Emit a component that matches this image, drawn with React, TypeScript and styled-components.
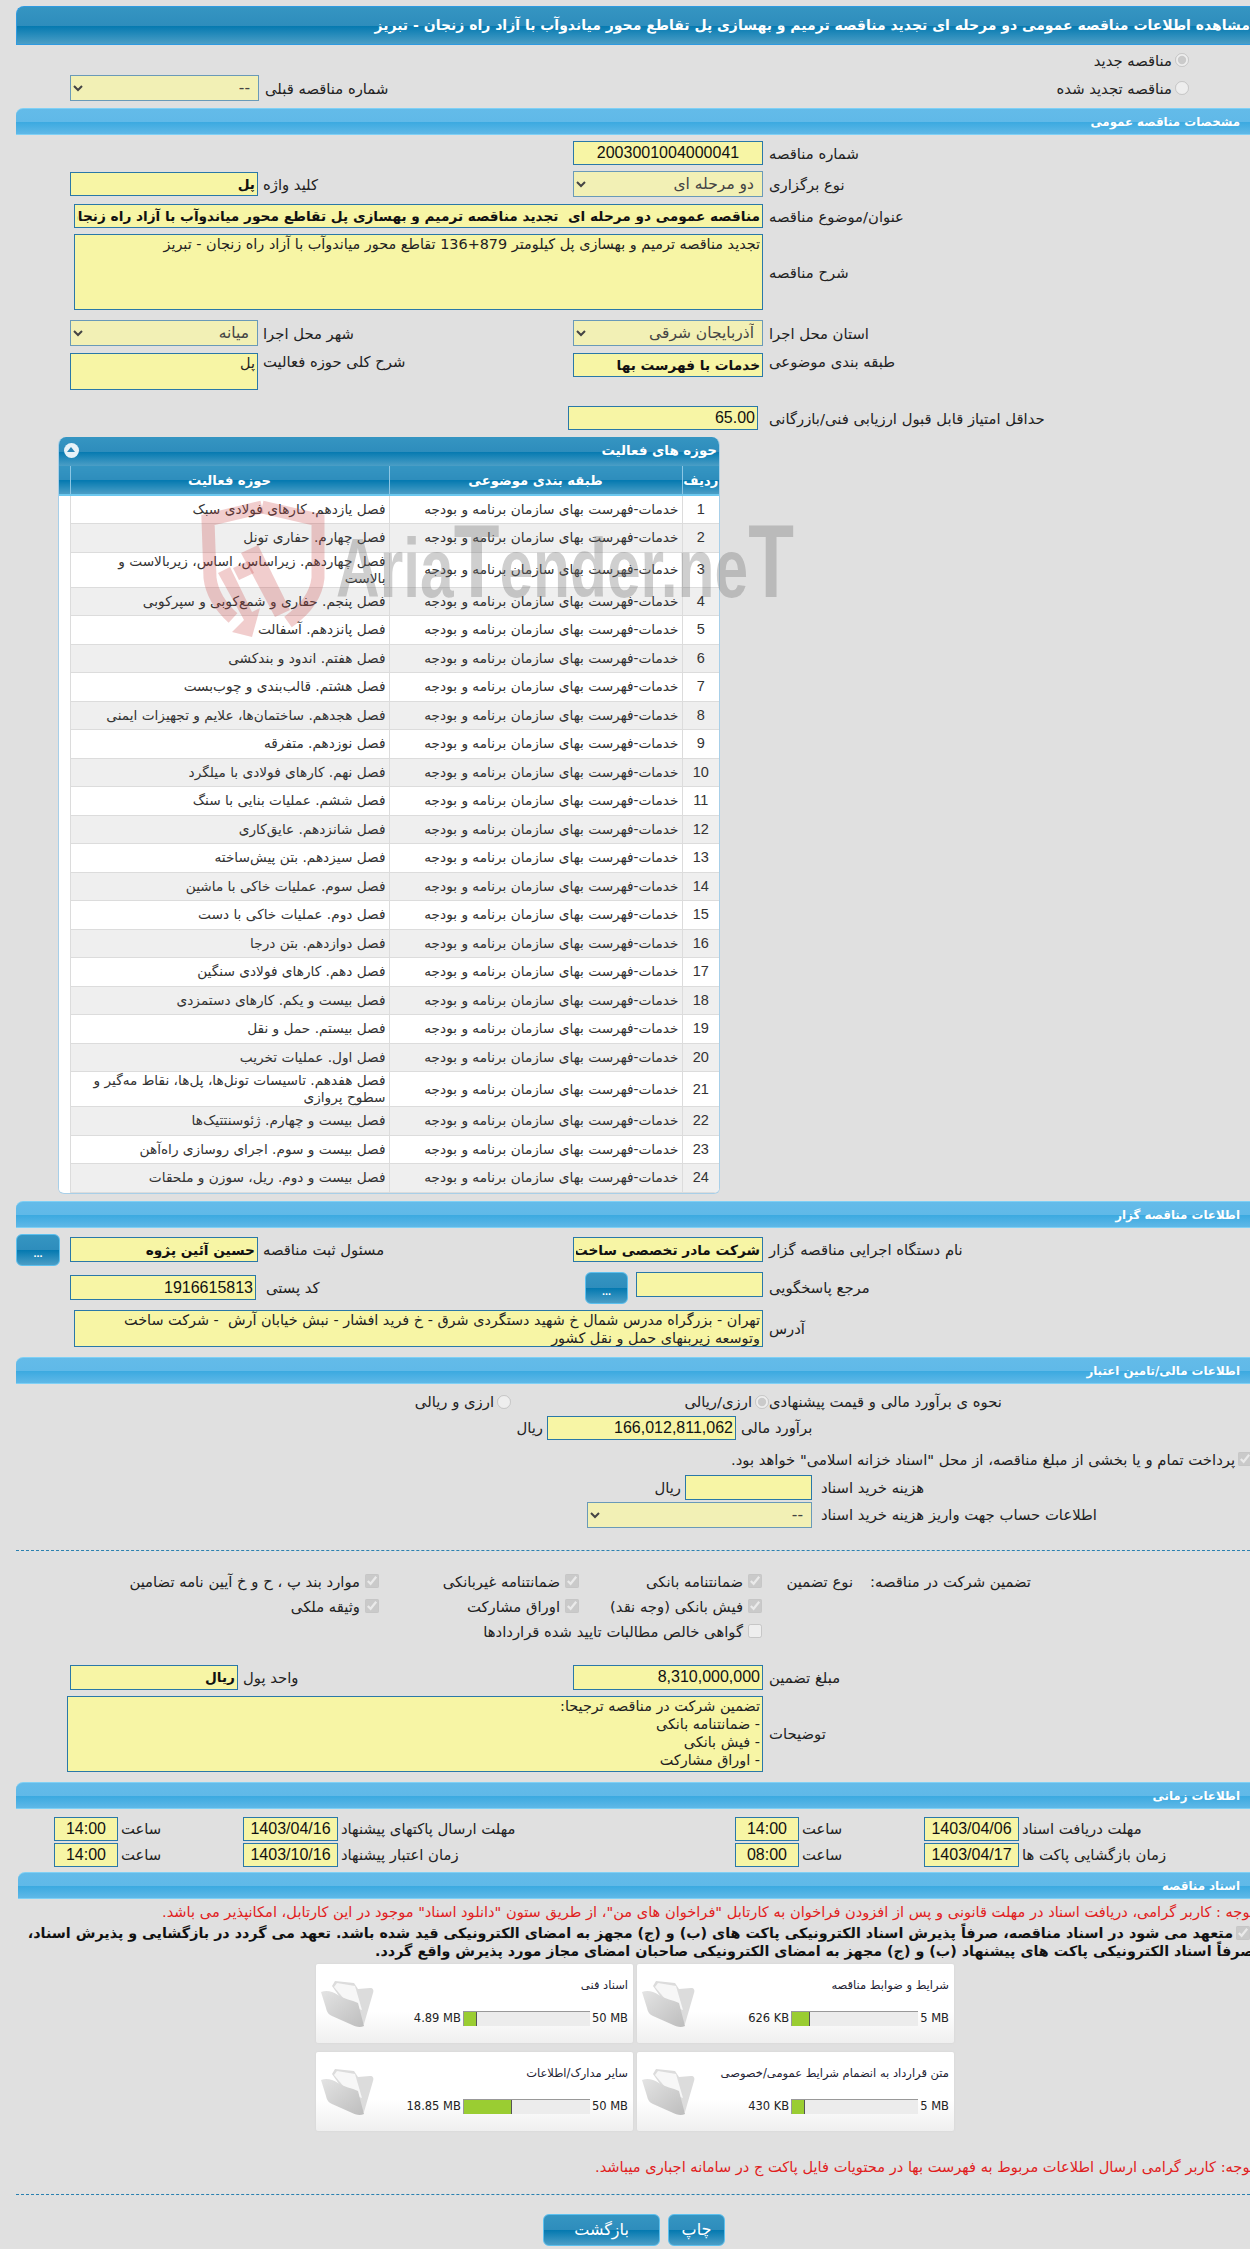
import React from 'react';
import styled, { createGlobalStyle } from 'styled-components';

const GlobalStyle = createGlobalStyle`
  html, body {
    margin: 0;
    padding: 0;
    background: #e0e0e0;
  }
  * {
    box-sizing: border-box;
  }
`;

const FONT = `"DejaVu Sans", "Liberation Sans", sans-serif`;
const DIGITS = `"Liberation Sans", "DejaVu Sans", sans-serif`;
const DARK = 'linear-gradient(#3595c2 0%, #2e8dbc 50%, #0479b0 51%, #4b9ec6 100%)';
const LIGHT = 'linear-gradient(#63bbe9 0%, #60b9e8 50%, #3aa9e0 51%, #5fb8e7 100%)';

const Page = styled.div`
  position: relative;
  width: 1250px;
  height: 2249px;
  padding: 6px 0 0 16px;
  overflow: hidden;
  direction: rtl;
  background: #e0e0e0;
  color: #222;
  font-family: ${FONT};
  font-size: 14.8px;
`;

const TitleBar = styled.div`
  height: 39px;
  padding-right: 0;
  border: 1px solid #2f9ae0;
  border-width: 1px 0 1px 1px;
  border-top-left-radius: 8px;
  background: ${DARK};
  color: #fff;
  font-size: 14px;
  font-weight: bold;
  line-height: 36px;
  white-space: nowrap;
`;

const SectionBar = styled.div<{ $mt: number; $ml?: number }>`
  height: 27px;
  margin-top: ${p => p.$mt}px;
  margin-left: ${p => p.$ml || 0}px;
  padding-right: 10px;
  border-top: 1px solid #7fd0f5;
  border-bottom: 1px solid #7fd0f5;
  border-top-left-radius: 7px;
  background: ${LIGHT};
  color: #fff;
  font-size: 11.8px;
  font-weight: bold;
  line-height: 26px;
`;

const Row = styled.div<{ $mt: number; $h: number; $start?: boolean }>`
  display: flex;
  align-items: ${p => (p.$start ? 'flex-start' : 'center')};
  height: ${p => p.$h}px;
  margin-top: ${p => p.$mt}px;
`;

const Lbl = styled.div<{ $w: number; $pl?: number }>`
  flex: none;
  width: ${p => p.$w}px;
  padding-left: ${p => p.$pl ?? 6}px;
  text-align: left;
  white-space: nowrap;
`;

const Input = styled.input<{ $w: number; $h?: number; $bold?: boolean; $center?: boolean; $top?: boolean }>`
  flex: none;
  width: ${p => p.$w}px;
  height: ${p => p.$h || 24}px;
  padding: 0 2px;
  border: 1px solid #2a78a8;
  background: #f7f5a5;
  color: #111;
  font-family: ${p => (p.$bold ? FONT : DIGITS)};
  font-size: ${p => (p.$bold ? 13.7 : 16)}px;
  font-weight: ${p => (p.$bold ? 'bold' : 'normal')};
  text-align: ${p => (p.$center ? 'center' : 'right')};
  align-self: ${p => (p.$top ? 'flex-start' : 'auto')};
  outline: none;
`;

const Area = styled.textarea<{ $w: number; $h: number }>`
  flex: none;
  display: block;
  width: ${p => p.$w}px;
  height: ${p => p.$h}px;
  padding: 0 2px;
  border: 1px solid #2a78a8;
  background: #f7f5a5;
  color: #222;
  font-family: ${FONT};
  font-size: 14.4px;
  line-height: 18px;
  resize: none;
  overflow: hidden;
  outline: none;
`;

const Select = styled.select<{ $w: number }>`
  flex: none;
  width: ${p => p.$w}px;
  height: 26px;
  padding: 0 4px;
  border: 1px solid #6a9ab8;
  background-color: #f2f0b5;
  color: #444;
  font-family: ${FONT};
  font-size: 15.5px;
  opacity: 1;
`;

const DotsButton = styled.button<{ $mr?: number; $w?: number }>`
  flex: none;
  width: ${p => p.$w || 44}px;
  height: 32px;
  margin-right: ${p => p.$mr ?? 10}px;
  padding: 8px 0 0;
  border: 1px solid #5cc0ee;
  border-radius: 6px;
  background: ${DARK};
  color: #fff;
  font-size: 11px;
  font-weight: bold;
  line-height: 1;
`;

const RadioGroup = styled.label<{ $mr?: number; $w?: number }>`
  display: flex;
  flex: none;
  align-items: center;
  gap: 3px;
  width: ${p => (p.$w ? `${p.$w}px` : 'auto')};
  margin-right: ${p => p.$mr || 0}px;
  white-space: nowrap;
`;

const Radio = styled.input.attrs({ type: 'radio', disabled: true })`
  flex: none;
  width: 14px;
  height: 14px;
  margin: 0;
`;

const Check = styled.input.attrs({ type: 'checkbox', disabled: true })`
  flex: none;
  width: 14px;
  height: 14px;
  margin: 0;
`;

const Unit = styled.span`
  margin-right: 4px;
  white-space: nowrap;
`;

const Spacer = styled.div`
  flex: 1;
`;

const PrevGroup = styled.div`
  display: flex;
  align-items: center;
  gap: 6px;
  margin-left: 54px;
  white-space: nowrap;
`;

const Panel = styled.div`
  width: 662px;
  margin: 7px 530px 0 0;
  border: 1px solid #a8cfe8;
  border-top: 0;
  border-radius: 8px 8px 6px 6px;
  background: #fff;
  overflow: hidden;
`;

const PanelHead = styled.div`
  position: relative;
  height: 29px;
  padding-right: 2px;
  background: ${DARK};
  color: #fff;
  font-size: 13.4px;
  font-weight: bold;
  line-height: 28px;
`;

const Collapse = styled.span`
  position: absolute;
  top: 6px;
  left: 5px;
  width: 15px;
  height: 15px;
  border-radius: 50%;
  background: #e6f2f8;
  &::after {
    content: '';
    position: absolute;
    top: 4px;
    left: 3px;
    border: 4.5px solid transparent;
    border-top: 0;
    border-bottom: 5px solid #2a85b5;
  }
`;

const Table = styled.table`
  width: 661px;
  border-collapse: collapse;
  table-layout: fixed;
`;

const Th = styled.th<{ $w?: number }>`
  width: ${p => (p.$w ? `${p.$w}px` : 'auto')};
  height: 29px;
  padding: 0;
  border-left: 1px solid #8cc6e4;
  border-bottom: 2px solid #6cc8ef;
  background: ${DARK};
  color: #fff;
  font-size: 13.2px;
  font-weight: bold;
`;

const Tr = styled.tr<{ $tall: boolean; $alt: boolean }>`
  height: ${p => (p.$tall ? 34.5 : 28.5)}px;
  background: ${p => (p.$alt ? '#efefef' : '#fff')};
`;

const Td = styled.td<{ $center?: boolean }>`
  padding: 0 3px;
  border-left: 1px solid #dcdcdc;
  border-bottom: 1px solid #dcdcdc;
  color: #333;
  font-family: ${p => (p.$center ? DIGITS : FONT)};
  font-size: ${p => (p.$center ? 14.5 : 13.7)}px;
  line-height: 17px;
  text-align: ${p => (p.$center ? 'center' : 'right')};
`;

const Gutter = styled.td`
  background: #fff;
  border-left: 1px solid #dcdcdc;
`;

const Divider = styled.div<{ $mt: number }>`
  margin-top: ${p => p.$mt}px;
  border-top: 1px dashed #2a80b0;
`;

const GuaranteeBlock = styled.div`
  display: flex;
  margin-top: 18px;
  padding-right: 219px;
`;

const GuaranteeLabel = styled.div<{ $w: number }>`
  flex: none;
  width: ${p => p.$w}px;
  height: 25px;
  line-height: 25px;
  white-space: nowrap;
`;

const CheckGrid = styled.div`
  display: grid;
  grid-template-columns: 183px 200px 1fr;
  grid-auto-rows: 25px;
`;

const CheckItem = styled.label<{ $wide?: boolean }>`
  display: flex;
  align-items: center;
  gap: 5px;
  white-space: nowrap;
  grid-column: ${p => (p.$wide ? 'span 2' : 'auto')};
`;

const RedNote = styled.div<{ $mt: number }>`
  height: 24px;
  margin: ${p => p.$mt}px -4px 0 0;
  color: #e02020;
  font-size: 14.6px;
  line-height: 24px;
  white-space: nowrap;
`;

const PledgeLine = styled.div<{ $mr?: number }>`
  display: flex;
  align-items: center;
  gap: 3px;
  height: 18px;
  margin-right: ${p => p.$mr || 0}px;
  color: #111;
  font-size: 14.3px;
  font-weight: bold;
  white-space: nowrap;
`;

const CardGrid = styled.div`
  display: grid;
  grid-template-columns: 317px 317px;
  grid-auto-rows: 79px;
  gap: 9px 4px;
  margin: 4px 296px 0 0;
`;

const Card = styled.div`
  display: flex;
  direction: ltr;
  padding: 0 5px 0 4px;
  border-radius: 2px;
  background: linear-gradient(#fff 0%, #fff 60%, #efefef 100%);
  box-shadow: 0 0 2px #d0d0d0;
`;

const FolderBox = styled.div`
  flex: none;
  width: 57px;
  padding-top: 16px;
`;

const CardBody = styled.div`
  flex: 1;
  display: flex;
  flex-direction: column;
`;

const CardTitle = styled.div`
  height: 47px;
  padding-top: 14px;
  direction: rtl;
  color: #223;
  font-size: 11.5px;
  white-space: nowrap;
`;

const Meter = styled.div`
  display: flex;
  align-items: center;
  justify-content: flex-end;
  gap: 2px;
  color: #222;
  font-size: 11.5px;
  white-space: nowrap;
`;

const Track = styled.div`
  flex: none;
  width: 127px;
  height: 15px;
  border-top: 1px solid #999;
  border-left: 1px solid #999;
  background: #ececec;
`;

const Fill = styled.div`
  height: 100%;
  border-right: 1px solid #555;
  background: #9acd32;
`;

const Buttons = styled.div`
  display: flex;
  gap: 8px;
  margin: 19px 525px 0 0;
`;

const ActionButton = styled.button<{ $w: number }>`
  width: ${p => p.$w}px;
  height: 32px;
  border: 1px solid #5cc0ee;
  border-radius: 6px;
  background: ${DARK};
  color: #fff;
  font-family: ${FONT};
  font-size: 16px;
`;

const Footer = styled.div`
  height: 1px;
  margin-top: 6px;
  background: #fff;
`;

const WatermarkText = styled.div`
  position: absolute;
  top: 506px;
  left: 336px;
  direction: ltr;
  color: rgba(105, 105, 105, 0.32);
  font-family: "Liberation Sans", sans-serif;
  font-size: 84px;
  font-weight: bold;
  line-height: 110px;
  white-space: nowrap;
  transform: scaleX(0.72);
  transform-origin: left center;
  pointer-events: none;
`;

const BigT = styled.span`
  font-size: 104px;
`;

const WatermarkLogo = styled.svg`
  position: absolute;
  top: 500px;
  left: 200px;
  width: 126px;
  height: 138px;
  pointer-events: none;
`;

const activities = [
  'فصل یازدهم. کارهای فولادی سبک',
  'فصل چهارم. حفاری تونل',
  'فصل چهاردهم. زیراساس، اساس، زیربالاست  و بالاست',
  'فصل پنجم. حفاری و شمع‌کوبی و سپرکوبی',
  'فصل پانزدهم. آسفالت',
  'فصل هفتم. اندود و بندکشی',
  'فصل هشتم. قالب‌بندی و چوب‌بست',
  'فصل هجدهم. ساختمان‌ها، علایم و تجهیزات ایمنی',
  'فصل نوزدهم. متفرقه',
  'فصل نهم. کارهای فولادی با میلگرد',
  'فصل ششم. عملیات بنایی با سنگ',
  'فصل شانزدهم. عایق‌کاری',
  'فصل سیزدهم. بتن پیش‌ساخته',
  'فصل سوم. عملیات خاکی با ماشین',
  'فصل دوم. عملیات خاکی با دست',
  'فصل دوازدهم. بتن درجا',
  'فصل دهم. کارهای فولادی سنگین',
  'فصل بیست و یکم. کارهای دستمزدی',
  'فصل بیستم. حمل و نقل',
  'فصل اول. عملیات تخریب',
  'فصل هفدهم. تاسیسات تونل‌ها، پل‌ها، نقاط مه‌گیر و سطوح پروازی',
  'فصل بیست و چهارم. ژئوسنتتیک‌ها',
  'فصل بیست و سوم. اجرای روسازی راه‌آهن',
  'فصل بیست و دوم. ریل، سوزن و ملحقات',
];

const files = [
  { title: 'شرایط و ضوابط مناقصه', used: '626 KB', max: '5 MB', pct: 14 },
  { title: 'اسناد فنی', used: '4.89 MB', max: '50 MB', pct: 10.5 },
  { title: 'متن قرارداد به انضمام شرایط عمومی/خصوصی', used: '430 KB', max: '5 MB', pct: 10.5 },
  { title: 'سایر مدارک/اطلاعات', used: '18.85 MB', max: '50 MB', pct: 38 },
];

const FolderIcon = () => (
  <svg width="54" height="48" viewBox="0 0 54 48">
    <defs>
      <linearGradient id="folderFront" x1="0" y1="0" x2="1" y2="1">
        <stop offset="0" stopColor="#e4e4e4" />
        <stop offset="1" stopColor="#bdbdbd" />
      </linearGradient>
    </defs>
    <path d="M12 6 L15 1 L34 3 L38 9 L50 8 C53 8 54 10 53 13 L44 44 L36 40 Z" fill="#dcdcdc" />
    <path d="M14 7 L17 3 L35 6 L42 30 L30 26 Z" fill="#f7f7f7" />
    <path d="M1 12 C6 10 12 11 18 15 C24 19 32 20 38 23 L44 46 C40 48 36 47 30 44 L12 36 C8 34 7 32 6 28 Z" fill="url(#folderFront)" />
  </svg>
);

const DocCard = ({ title, used, max, pct }: (typeof files)[number]) => (
  <Card>
    <FolderBox>
      <FolderIcon />
    </FolderBox>
    <CardBody>
      <CardTitle>{title}</CardTitle>
      <Meter>
        <span>{used}</span>
        <Track>
          <Fill style={{ width: `${pct}%` }} />
        </Track>
        <span>{max}</span>
      </Meter>
    </CardBody>
  </Card>
);

const Val = ({ w, v, ...rest }: { w: number; v: string; $h?: number; $bold?: boolean; $center?: boolean; $top?: boolean }) => (
  <Input $w={w} value={v} readOnly {...rest} />
);

const Drop = ({ w, v }: { w: number; v: string }) => (
  <Select $w={w} value={v} disabled onChange={() => undefined}>
    <option value={v}>{v}</option>
  </Select>
);

const App = () => (
  <Page>
    <GlobalStyle />
    <TitleBar>
      مشاهده اطلاعات مناقصه عمومی دو مرحله ای تجدید مناقصه ترمیم و بهسازی پل تقاطع محور میاندوآب با آزاد راه زنجان - تبریز
    </TitleBar>

    <Row $mt={0} $h={30}>
      <RadioGroup $mr={61}>
        <Radio checked readOnly />
        مناقصه جدید
      </RadioGroup>
    </Row>
    <Row $mt={0} $h={26}>
      <RadioGroup $mr={61}>
        <Radio />
        مناقصه تجدید شده
      </RadioGroup>
      <Spacer />
      <PrevGroup>
        شماره مناقصه قبلی
        <Drop w={189} v="--" />
      </PrevGroup>
    </Row>

    <SectionBar $mt={7}>مشخصات مناقصه عمومی</SectionBar>
    <Row $mt={6} $h={24}>
      <Lbl $w={487}>شماره مناقصه</Lbl>
      <Val w={190} v="2003001004000041" $center />
    </Row>
    <Row $mt={6} $h={26}>
      <Lbl $w={487}>نوع برگزاری</Lbl>
      <Drop w={190} v="دو مرحله ای" />
      <Lbl $w={315} $pl={5}>کلید واژه</Lbl>
      <Val w={188} v="پل" $bold />
    </Row>
    <Row $mt={7} $h={24}>
      <Lbl $w={487}>عنوان/موضوع مناقصه</Lbl>
      <Val w={689} v="مناقصه عمومی دو مرحله ای  تجدید مناقصه ترمیم و بهسازی پل تقاطع محور میاندوآب با آزاد راه زنجان - تبریز" $bold />
    </Row>
    <Row $mt={6} $h={76}>
      <Lbl $w={487}>شرح مناقصه</Lbl>
      <Area $w={689} $h={76} readOnly value="تجدید مناقصه ترمیم و بهسازی پل کیلومتر 879+136 تقاطع محور میاندوآب با آزاد راه زنجان - تبریز" />
    </Row>
    <Row $mt={10} $h={26}>
      <Lbl $w={487}>استان محل اجرا</Lbl>
      <Drop w={190} v="آذربایجان شرقی" />
      <Lbl $w={315} $pl={5}>شهر محل اجرا</Lbl>
      <Drop w={188} v="میانه" />
    </Row>
    <Row $mt={7} $h={37} $start>
      <Lbl $w={487}>طبقه بندی موضوعی</Lbl>
      <Val w={190} v="خدمات با فهرست بها" $bold />
      <Lbl $w={315} $pl={5}>شرح کلی حوزه فعالیت</Lbl>
      <Area $w={188} $h={37} readOnly value="پل" />
    </Row>
    <Row $mt={16} $h={24}>
      <Lbl $w={492} $pl={11}>حداقل امتیاز قابل قبول ارزیابی فنی/بازرگانی</Lbl>
      <Val w={190} v="65.00" />
    </Row>

    <Panel>
      <PanelHead>
        حوزه های فعالیت
        <Collapse />
      </PanelHead>
      <Table>
        <thead>
          <tr>
            <Th $w={37}>ردیف</Th>
            <Th $w={293}>طبقه بندی موضوعی</Th>
            <Th $w={319}>حوزه فعالیت</Th>
            <Th />
          </tr>
        </thead>
        <tbody>
          {activities.map((name, i) => (
            <Tr key={name} $tall={i === 2 || i === 20} $alt={i % 2 === 1}>
              <Td $center>{i + 1}</Td>
              <Td>خدمات-فهرست بهای سازمان برنامه و بودجه</Td>
              <Td>{name}</Td>
              <Gutter />
            </Tr>
          ))}
        </tbody>
      </Table>
    </Panel>

    <SectionBar $mt={7}>اطلاعات مناقصه گزار</SectionBar>
    <Row $mt={6} $h={32}>
      <Lbl $w={487}>نام دستگاه اجرایی مناقصه گزار</Lbl>
      <Val w={190} v="شرکت مادر تخصصی ساخت و توسعه زیربناهای حمل و نقل" $h={25} $bold />
      <Lbl $w={315} $pl={5}>مسئول ثبت مناقصه</Lbl>
      <Val w={188} v="حسین آئین پژوه" $h={25} $bold />
      <DotsButton>...</DotsButton>
    </Row>
    <Row $mt={6} $h={32}>
      <Lbl $w={487}>مرجع پاسخگویی</Lbl>
      <Val w={127} v="" $h={25} $top />
      <DotsButton $mr={8} $w={43}>...</DotsButton>
      <Lbl $w={329} $pl={10}>کد پستی</Lbl>
      <Val w={186} v="1916615813" $h={25} />
    </Row>
    <Row $mt={6} $h={37}>
      <Lbl $w={487}>آدرس</Lbl>
      <Area $w={689} $h={37} readOnly value={'تهران - بزرگراه مدرس شمال خ شهید دستگردی شرق - خ فرید افشار - نبش خیابان آرش  - شرکت ساخت\nوتوسعه زیربنهای حمل و نقل کشور'} />
    </Row>

    <SectionBar $mt={10}>اطلاعات مالی/تامین اعتبار</SectionBar>
    <Row $mt={8} $h={20}>
      <Lbl $w={481} $pl={0}>نحوه ی برآورد مالی و قیمت پیشنهادی</Lbl>
      <RadioGroup $w={258}>
        <Radio checked readOnly />
        ارزی/ریالی
      </RadioGroup>
      <RadioGroup>
        <Radio />
        ارزی و ریالی
      </RadioGroup>
    </Row>
    <Row $mt={4} $h={24}>
      <Lbl $w={514} $pl={5}>برآورد مالی</Lbl>
      <Val w={189} v="166,012,811,062" />
      <Unit>ریال</Unit>
    </Row>
    <Row $mt={11} $h={17}>
      <RadioGroup $mr={-2}>
        <Check checked readOnly />
        پرداخت تمام و یا بخشی از مبلغ مناقصه، از محل "اسناد خزانه اسلامی" خواهد بود.
      </RadioGroup>
    </Row>
    <Row $mt={7} $h={25}>
      <Lbl $w={438} $pl={9}>هزینه خرید اسناد</Lbl>
      <Val w={127} v="" $h={25} />
      <Unit>ریال</Unit>
    </Row>
    <Row $mt={2} $h={26}>
      <Lbl $w={438} $pl={9}>اطلاعات حساب جهت واریز هزینه خرید اسناد</Lbl>
      <Drop w={225} v="--" />
    </Row>

    <Divider $mt={22} />
    <GuaranteeBlock>
      <GuaranteeLabel $w={178}>تضمین شرکت در مناقصه:</GuaranteeLabel>
      <GuaranteeLabel $w={91}>نوع تضمین</GuaranteeLabel>
      <CheckGrid>
        <CheckItem><Check checked readOnly />ضمانتنامه بانکی</CheckItem>
        <CheckItem><Check checked readOnly />ضمانتنامه غیربانکی</CheckItem>
        <CheckItem><Check checked readOnly />موارد بند پ ، ح و خ آیین نامه تضامین</CheckItem>
        <CheckItem><Check checked readOnly />فیش بانکی (وجه نقد)</CheckItem>
        <CheckItem><Check checked readOnly />اوراق مشارکت</CheckItem>
        <CheckItem><Check checked readOnly />وثیقه ملکی</CheckItem>
        <CheckItem $wide><Check />گواهی خالص مطالبات تایید شده قراردادها</CheckItem>
      </CheckGrid>
    </GuaranteeBlock>
    <Row $mt={21} $h={25}>
      <Lbl $w={487}>مبلغ تضمین</Lbl>
      <Val w={190} v="8,310,000,000" $h={25} />
      <Lbl $w={335} $pl={5}>واحد پول</Lbl>
      <Val w={168} v="ریال" $h={25} $bold />
    </Row>
    <Row $mt={6} $h={76}>
      <Lbl $w={487}>توضیحات</Lbl>
      <Area $w={696} $h={76} readOnly value={'تضمین شرکت در مناقصه ترجیحا:\n- ضمانتنامه بانکی\n- فیش بانکی\n- اوراق مشارکت'} />
    </Row>

    <SectionBar $mt={10}>اطلاعات زمانی</SectionBar>
    <Row $mt={8} $h={24}>
      <Lbl $w={231} $pl={3}>مهلت دریافت اسناد</Lbl>
      <Val w={95} v="1403/04/06" $center />
      <Lbl $w={125} $pl={3}>ساعت</Lbl>
      <Val w={64} v="14:00" $center />
      <Lbl $w={397} $pl={3}>مهلت ارسال پاکتهای پیشنهاد</Lbl>
      <Val w={95} v="1403/04/16" $center />
      <Lbl $w={125} $pl={3}>ساعت</Lbl>
      <Val w={64} v="14:00" $center />
    </Row>
    <Row $mt={2} $h={24}>
      <Lbl $w={231} $pl={3}>زمان بازگشایی پاکت ها</Lbl>
      <Val w={95} v="1403/04/17" $center />
      <Lbl $w={125} $pl={3}>ساعت</Lbl>
      <Val w={64} v="08:00" $center />
      <Lbl $w={397} $pl={3}>زمان اعتبار پیشنهاد</Lbl>
      <Val w={95} v="1403/10/16" $center />
      <Lbl $w={125} $pl={3}>ساعت</Lbl>
      <Val w={64} v="14:00" $center />
    </Row>

    <SectionBar $mt={5} $ml={2}>اسناد مناقصه</SectionBar>
    <RedNote $mt={1}>
      توجه : کاربر گرامی، دریافت اسناد در مهلت قانونی و پس از افزودن فراخوان به کارتابل "فراخوان های من"، از طریق ستون "دانلود اسناد" موجود در این کارتابل، امکانپذیر می باشد.
    </RedNote>
    <PledgeLine>
      <Check checked readOnly />
      متعهد می شود در اسناد مناقصه، صرفاً پذیرش اسناد الکترونیکی پاکت های (ب) و (ج) مجهز به امضای الکترونیکی قید شده باشد. تعهد می گردد در بازگشایی و پذیرش اسناد،
    </PledgeLine>
    <PledgeLine $mr={-4}>
      صرفاً اسناد الکترونیکی پاکت های پیشنهاد (ب) و (ج) مجهز به امضای الکترونیکی صاحبان امضای مجاز مورد پذیرش واقع گردد.
    </PledgeLine>

    <CardGrid>
      {files.map(f => (
        <DocCard key={f.title} {...f} />
      ))}
    </CardGrid>

    <RedNote $mt={24}>
      توجه: کاربر گرامی ارسال اطلاعات مربوط به فهرست بها در محتویات فایل پاکت ج در سامانه اجباری میباشد.
    </RedNote>
    <Divider $mt={15} />
    <Buttons>
      <ActionButton $w={57}>چاپ</ActionButton>
      <ActionButton $w={117}>بازگشت</ActionButton>
    </Buttons>
    <Footer />

    <WatermarkLogo viewBox="0 0 126 138">
      <g fill="none" stroke="rgba(205,70,70,0.27)" strokeWidth="13">
        <path d="M62 7 L118 20 L118 78 C116 98 102 112 88 122" />
        <path d="M62 7 L8 20 L10 78 C12 94 22 108 33 118" />
      </g>
      <g fill="rgba(205,70,70,0.27)">
        <path d="M41 53 L58 45 L90 110 L75 117 Z" />
        <path d="M33 68 L48 61 L54 73 L39 80 Z" />
        <path d="M18 73 L30 67 L52 112 L60 108 L52 137 L32 132 L44 120 Z" />
      </g>
    </WatermarkLogo>
    <WatermarkText>Aria<BigT>T</BigT>ender.ne<BigT>T</BigT></WatermarkText>
  </Page>
);

export default App;
